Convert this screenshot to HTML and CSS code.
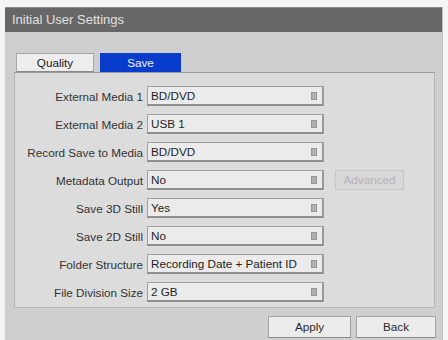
FILE: index.html
```html
<!DOCTYPE html>
<html>
<head>
<meta charset="utf-8">
<link rel="stylesheet" href="styles.css">
</head>
<body>
<div class="window">
  <div class="titlebar">Initial User Settings</div>
  <div class="tabs">
    <div class="tab">Quality</div>
    <div class="tab active">Save</div>
  </div>
  <div class="panel">
    <div class="row"><span class="label">External Media 1</span><div class="select"><span>BD/DVD</span><i class="arrow"></i></div></div>
    <div class="row"><span class="label">External Media 2</span><div class="select"><span>USB 1</span><i class="arrow"></i></div></div>
    <div class="row"><span class="label">Record Save to Media</span><div class="select"><span>BD/DVD</span><i class="arrow"></i></div></div>
    <div class="row"><span class="label">Metadata Output</span><div class="select"><span>No</span><i class="arrow"></i></div><div class="btn disabled">Advanced</div></div>
    <div class="row"><span class="label">Save 3D Still</span><div class="select"><span>Yes</span><i class="arrow"></i></div></div>
    <div class="row"><span class="label">Save 2D Still</span><div class="select"><span>No</span><i class="arrow"></i></div></div>
    <div class="row"><span class="label">Folder Structure</span><div class="select"><span>Recording Date + Patient ID</span><i class="arrow"></i></div></div>
    <div class="row"><span class="label">File Division Size</span><div class="select"><span>2 GB</span><i class="arrow"></i></div></div>
  </div>
  <div class="footer">
    <div class="btn apply">Apply</div>
    <div class="btn back">Back</div>
  </div>
</div>
</body>
</html>
```
FILE: styles.css
```css
html, body {
  margin: 0;
  padding: 0;
  background: #f4f4f4;
}
body {
  font-family: "Liberation Sans", Arial, sans-serif;
  font-size: 11.7px;
  color: #2a2a2a;
}
.window {
  margin: 7px 0 0 5px;
  width: 438px;
  height: 333px;
  background: #cecece;
  border-right: 1px solid #bdbdbd;
  box-sizing: border-box;
}
.titlebar {
  height: 25px;
  background: #676767;
  border-top: 1px solid #8a8a8a;
  box-sizing: border-box;
  color: #e0e0e0;
  font-size: 13px;
  line-height: 23px;
  padding-left: 7px;
}
.tabs {
  display: flex;
  gap: 6px;
  padding: 21px 0 0 11px;
  height: 19px;
}
.tab {
  width: 78px;
  height: 19px;
  box-sizing: border-box;
  background: #ededed;
  border: 1px solid #a8a8a8;
  border-bottom-color: #8a8a8a;
  text-align: center;
  line-height: 17px;
  color: #222;
}
.tab.active {
  width: 81px;
  background: #0a3ccc;
  border-color: #0a3ccc;
  color: #eef0ff;
}
.panel {
  margin-left: 9px;
  width: 421px;
  height: 236px;
  box-sizing: border-box;
  background: #dcdcdc;
  border: 1px solid #b4b4b4;
  border-top-color: #9a9a9a;
  padding-top: 13px;
  display: flex;
  flex-direction: column;
  gap: 8px;
}
.row {
  display: flex;
  align-items: center;
  height: 20px;
}
.label {
  width: 128px;
  text-align: right;
  margin-right: 4px;
  white-space: nowrap;
  color: #333;
}
.select {
  width: 177px;
  height: 20px;
  box-sizing: border-box;
  background: #ebebeb;
  border: 1px solid #a0a0a0;
  border-bottom: 2px solid #8e8e8e;
  border-right: 2px solid #9a9a9a;
  display: flex;
  align-items: center;
  justify-content: space-between;
  padding: 0 5px 0 3px;
  color: #1e1e1e;
}
.arrow {
  display: block;
  width: 4px;
  height: 6px;
  background: #b0b0b0;
  border: 1px solid #969696;
}
.btn {
  box-sizing: border-box;
  background: #ececec;
  border: 1px solid #a4a4a4;
  border-bottom-color: #8a8a8a;
  text-align: center;
  color: #2a2a2a;
}
.btn.disabled {
  margin-left: 11px;
  width: 69px;
  height: 20px;
  line-height: 18px;
  background: #d8d8d8;
  border-color: #c6c6c6;
  color: #b4b4b4;
}
.footer {
  display: flex;
  justify-content: flex-end;
  gap: 5px;
  padding: 8px 6px 0 0;
}
.btn.apply {
  width: 83px;
  height: 22px;
  line-height: 20px;
}
.btn.back {
  width: 80px;
  height: 22px;
  line-height: 20px;
}
```
